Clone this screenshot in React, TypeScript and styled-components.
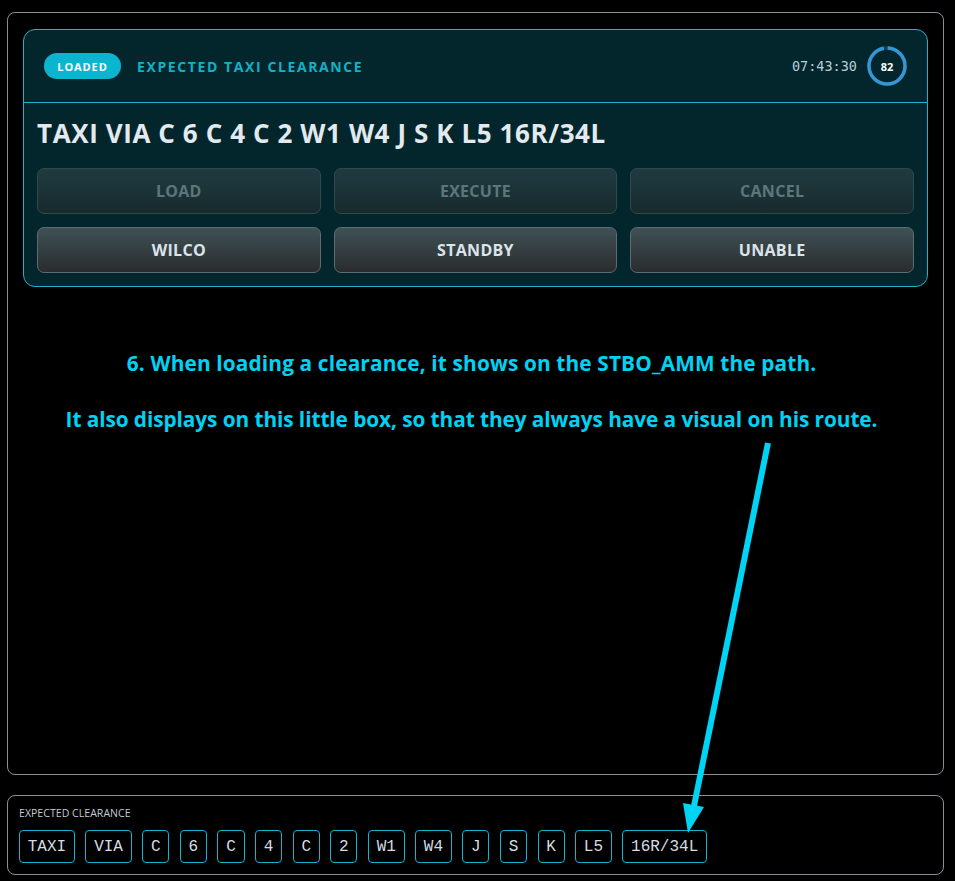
import React from "react";
import styled, { createGlobalStyle } from "styled-components";

const Global = createGlobalStyle`
  html, body { margin: 0; padding: 0; background: #000; }
  body { font-family: "Open Sans", "Noto Sans", sans-serif; color: #e0e8ee; }
  * { box-sizing: border-box; }
`;

const Page = styled.div`
  position: relative;
  width: 955px;
  height: 881px;
  padding: 12px 11px 6px 7px;
  display: flex;
  flex-direction: column;
  gap: 20px;
`;

const Panel = styled.div`
  border: 1px solid #8a8f96;
  border-radius: 8px;
  height: 763px;
  padding: 16px 15px;
  display: flex;
  flex-direction: column;
`;

const Card = styled.div`
  background: #02262b;
  border: 1px solid #1ab4cc;
  border-radius: 12px;
  overflow: hidden;
`;

const CardHeader = styled.div`
  display: flex;
  align-items: center;
  height: 73px;
  padding: 0 20px;
  border-bottom: 1px solid #1ab4cc;
  gap: 16px;
`;

const Pill = styled.span`
  display: inline-flex;
  align-items: center;
  justify-content: center;
  width: 77px;
  height: 26px;
  border-radius: 13px;
  background: #0bb5cf;
  color: #fff;
  font-weight: 700;
  font-size: 11px;
  letter-spacing: 0.9px;
`;

const HeaderTitle = styled.span`
  color: #13b0c9;
  font-weight: 700;
  font-size: 14px;
  letter-spacing: 1.6px;
  flex: 1;
`;

const Clock = styled.span`
  font-family: "DejaVu Sans Mono", monospace;
  font-size: 13.5px;
  color: #b6cfdc;
  margin-right: -6px;
`;

const RingWrap = styled.div`
  position: relative;
  width: 40px;
  height: 40px;
  display: flex;
  align-items: center;
  justify-content: center;
`;

const RingSvg = styled.svg`
  position: absolute;
  inset: 0;
`;

const RingLabel = styled.span`
  position: relative;
  font-size: 11px;
  font-weight: 700;
  color: #fff;
`;

const CardBody = styled.div`
  padding: 13px 13px 13px 13px;
`;

const Clearance = styled.div`
  font-size: 26px;
  font-weight: 700;
  color: #e2e9ef;
  line-height: 34px;
  letter-spacing: 0.6px;
  margin-bottom: 18px;
`;

const ButtonGrid = styled.div`
  display: grid;
  grid-template-columns: repeat(3, 1fr);
  gap: 13px;
`;

const Btn = styled.button<{ $disabled?: boolean }>`
  height: 46px;
  border-radius: 7px;
  font-family: "Open Sans", sans-serif;
  font-size: 16px;
  font-weight: 700;
  letter-spacing: 0.3px;
  cursor: pointer;
  border: 1px solid ${(p) => (p.$disabled ? "#2e4a4f" : "#5c6c70")};
  color: ${(p) => (p.$disabled ? "#5b777c" : "#dce3ea")};
  background: ${(p) =>
    p.$disabled
      ? "linear-gradient(to bottom, #1f3b40, #182a2d)"
      : "linear-gradient(to bottom, #3f5155, #2a2c2e)"};
`;

const Note = styled.div`
  margin-top: 61px;
  display: flex;
  flex-direction: column;
  align-items: center;
  gap: 26px;
  color: #00d2f3;
  font-family: "Open Sans", sans-serif;
  font-weight: 700;
  font-size: 20.8px;
  line-height: 30px;
  padding-right: 8px;
  white-space: nowrap;
`;

const NoteLine = styled.div<{ $spacing: number }>`
  letter-spacing: ${(p) => p.$spacing}px;
`;

const Bottom = styled.div`
  border: 1px solid #8a8f96;
  border-radius: 8px;
  height: 80px;
  padding: 11px 11px;
`;

const BottomLabel = styled.div`
  font-family: "Open Sans", sans-serif;
  font-size: 10.5px;
  letter-spacing: 0.05px;
  color: #c2cad2;
  line-height: 12px;
  margin-bottom: 11px;
`;

const Chips = styled.div`
  display: flex;
  gap: 10.5px;
`;

const Chip = styled.span`
  height: 33px;
  padding: 0 7.75px;
  display: inline-flex;
  align-items: center;
  border: 1px solid #14b4cc;
  border-radius: 4px;
  font-family: "Liberation Mono", monospace;
  font-size: 16px;
  color: #d4dce4;
`;

const Arrow = styled.svg`
  position: absolute;
  left: 0;
  top: 0;
  pointer-events: none;
`;

const tokens = ["TAXI", "VIA", "C", "6", "C", "4", "C", "2", "W1", "W4", "J", "S", "K", "L5", "16R/34L"];

export default function App() {
  const r = 18;
  const c = 2 * Math.PI * r;
  return (
    <>
      <Global />
      <Page>
        <Panel>
          <Card>
            <CardHeader>
              <Pill>LOADED</Pill>
              <HeaderTitle>EXPECTED TAXI CLEARANCE</HeaderTitle>
              <Clock>07:43:30</Clock>
              <RingWrap>
                <RingSvg width="40" height="40" viewBox="0 0 40 40">
                  <circle cx="20" cy="20" r={r} fill="none" stroke="#15414a" strokeWidth="3.5" />
                  <circle
                    cx="20"
                    cy="20"
                    r={r}
                    fill="none"
                    stroke="#3596d6"
                    strokeWidth="3.5"
                    strokeDasharray={`${c * 0.96} ${c}`}
                    transform="rotate(-88 20 20)"
                  />
                </RingSvg>
                <RingLabel>82</RingLabel>
              </RingWrap>
            </CardHeader>
            <CardBody>
              <Clearance>TAXI VIA C 6 C 4 C 2 W1 W4 J S K L5 16R/34L</Clearance>
              <ButtonGrid>
                <Btn $disabled>LOAD</Btn>
                <Btn $disabled>EXECUTE</Btn>
                <Btn $disabled>CANCEL</Btn>
                <Btn>WILCO</Btn>
                <Btn>STANDBY</Btn>
                <Btn>UNABLE</Btn>
              </ButtonGrid>
            </CardBody>
          </Card>
          <Note>
            <NoteLine $spacing={0.15}>6. When loading a clearance, it shows on the STBO_AMM the path.</NoteLine>
            <NoteLine $spacing={-0.07}>
              It also displays on this little box, so that they always have a visual on his route.
            </NoteLine>
          </Note>
        </Panel>
        <Bottom>
          <BottomLabel>EXPECTED CLEARANCE</BottomLabel>
          <Chips>
            {tokens.map((t, i) => (
              <Chip key={i}>{t}</Chip>
            ))}
          </Chips>
        </Bottom>
        <Arrow width="955" height="881" viewBox="0 0 955 881">
          <line x1="768" y1="443" x2="694" y2="806" stroke="#00d4f5" strokeWidth="6" />
          <polygon points="683,803 704,807 688,833" fill="#00d4f5" />
        </Arrow>
      </Page>
    </>
  );
}
